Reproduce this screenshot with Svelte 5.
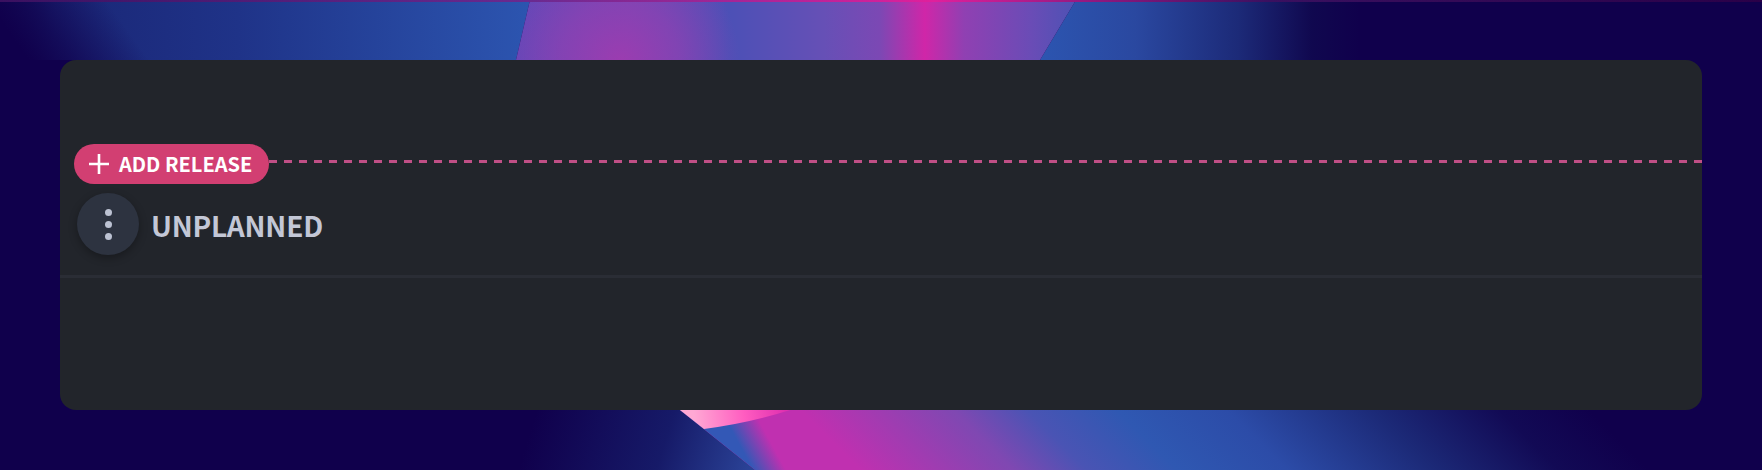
<script lang="ts">
	const releaseLabel = 'ADD RELEASE';
	const groupName = 'UNPLANNED';
</script>

<div class="page">
	<svg class="backdrop" viewBox="0 0 1762 470" preserveAspectRatio="none" aria-hidden="true">
		<defs>
			<linearGradient id="topBlue" gradientUnits="userSpaceOnUse" x1="0" y1="0" x2="530" y2="0">
				<stop offset="0" stop-color="#16165f" />
				<stop offset="0.1" stop-color="#1a2676" />
				<stop offset="0.45" stop-color="#1f3388" />
				<stop offset="1" stop-color="#2c55b0" />
			</linearGradient>
			<linearGradient id="topCorner" gradientUnits="userSpaceOnUse" x1="30" y1="62" x2="110" y2="5">
				<stop offset="0" stop-color="#10004c" />
				<stop offset="0.35" stop-color="#10004c" stop-opacity="0.7" />
				<stop offset="1" stop-color="#10004c" stop-opacity="0" />
			</linearGradient>
			<linearGradient id="topPink" gradientUnits="userSpaceOnUse" x1="516" y1="0" x2="1076" y2="0">
				<stop offset="0" stop-color="#6048b8" />
				<stop offset="0.2" stop-color="#6a4ab6" />
				<stop offset="0.38" stop-color="#4c50b6" />
				<stop offset="0.55" stop-color="#6650b6" />
				<stop offset="0.65" stop-color="#7c48b4" />
				<stop offset="0.73" stop-color="#d026a8" />
				<stop offset="0.8" stop-color="#9040b2" />
				<stop offset="0.92" stop-color="#6a4cb6" />
				<stop offset="1" stop-color="#4d52b4" />
			</linearGradient>
			<radialGradient id="topGlow" gradientUnits="userSpaceOnUse" cx="620" cy="62" r="120">
				<stop offset="0" stop-color="#9c3cb0" />
				<stop offset="0.5" stop-color="#9040b2" stop-opacity="0.7" />
				<stop offset="1" stop-color="#9040b2" stop-opacity="0" />
			</radialGradient>
			<linearGradient id="topRight" gradientUnits="userSpaceOnUse" x1="1040" y1="0" x2="1360" y2="0">
				<stop offset="0" stop-color="#2c55b0" />
				<stop offset="0.3" stop-color="#2a48a0" />
				<stop offset="0.62" stop-color="#1c2a78" />
				<stop offset="0.85" stop-color="#10084f" />
				<stop offset="1" stop-color="#10004c" />
			</linearGradient>
			<linearGradient id="bottomLeft" gradientUnits="userSpaceOnUse" x1="540" y1="400" x2="750" y2="465">
				<stop offset="0" stop-color="#10004c" />
				<stop offset="0.6" stop-color="#161a68" />
				<stop offset="1" stop-color="#2a4296" />
			</linearGradient>
			<linearGradient id="bottomMain" gradientUnits="userSpaceOnUse" x1="712" y1="440" x2="1166" y2="-14">
				<stop offset="0" stop-color="#c030b0" />
				<stop offset="0.13" stop-color="#c030b0" />
				<stop offset="0.3" stop-color="#7f48b2" />
				<stop offset="0.38" stop-color="#4a54b4" />
				<stop offset="0.48" stop-color="#2f58b2" />
				<stop offset="0.6" stop-color="#2c4ca8" />
				<stop offset="0.76" stop-color="#1c2a78" />
				<stop offset="0.9" stop-color="#120a55" />
				<stop offset="1" stop-color="#10004c" />
			</linearGradient>
			<linearGradient id="bottomWedge" gradientUnits="userSpaceOnUse" x1="722" y1="462" x2="768" y2="437">
				<stop offset="0" stop-color="#3358b6" />
				<stop offset="0.45" stop-color="#3358b6" />
				<stop offset="1" stop-color="#3358b6" stop-opacity="0" />
			</linearGradient>
			<linearGradient id="flare" gradientUnits="userSpaceOnUse" x1="695" y1="422" x2="785" y2="410">
				<stop offset="0" stop-color="#ffa8d4" />
				<stop offset="0.55" stop-color="#ff5cc0" />
				<stop offset="1" stop-color="#e030b0" />
			</linearGradient>
			<linearGradient id="topEdge" gradientUnits="userSpaceOnUse" x1="0" y1="0" x2="1762" y2="0">
				<stop offset="0" stop-color="#3a1060" />
				<stop offset="0.3" stop-color="#6a2a90" />
				<stop offset="0.53" stop-color="#e0209c" />
				<stop offset="0.72" stop-color="#3a1060" />
				<stop offset="1" stop-color="#2a0048" />
			</linearGradient>
		</defs>
		<rect width="1762" height="470" fill="#10004c" />
		<polygon points="0,0 530,0 516,60 0,60" fill="url(#topBlue)" />
		<rect width="200" height="60" fill="url(#topCorner)" />
		<polygon points="1076,0 1360,0 1360,60 1040,60" fill="url(#topRight)" />
		<polygon points="530,0 1076,0 1040,60 516,60" fill="url(#topPink)" />
		<polygon points="530,0 800,0 800,60 516,60" fill="url(#topGlow)" />
		<rect width="1762" height="2" fill="url(#topEdge)" />
		<polygon points="520,410 680,410 755,470 520,470" fill="url(#bottomLeft)" />
		<polygon points="680,410 1720,410 1720,470 755,470" fill="url(#bottomMain)" />
		<polygon points="680,410 860,410 860,470 755,470" fill="url(#bottomWedge)" />
		<path d="M680 410 L704 429 Q750 423 790 410 Z" fill="url(#flare)" />
	</svg>

	<section class="card">
		<div class="release-row">
			<button class="add-release">
				<svg viewBox="0 0 20 20" width="20" height="20" aria-hidden="true">
					<path d="M10 0V20M0 10H20" fill="none" stroke="currentColor" stroke-width="2.6" />
				</svg>
				{releaseLabel}
			</button>
			<span class="dashes"></span>
		</div>
		<div class="group">
			<button class="menu" aria-label="Menu">
				<span></span><span></span><span></span>
			</button>
			<h2>{groupName}</h2>
		</div>
	</section>
</div>

<style>
	:global(body) {
		margin: 0;
		background: #10004c;
	}

	.page {
		position: relative;
		width: 1762px;
		height: 470px;
		padding: 60px;
		box-sizing: border-box;
		overflow: hidden;
		font-family: "Noto Sans CJK JP", "Noto Sans", sans-serif;
	}

	.backdrop {
		position: absolute;
		inset: 0;
		width: 100%;
		height: 100%;
	}

	.card {
		position: relative;
		height: 350px;
		padding-top: 84px;
		box-sizing: border-box;
		background: #22252b;
		border-radius: 16px;
	}

	.release-row {
		display: flex;
		align-items: center;
		height: 40px;
		padding-left: 14px;
	}

	.add-release {
		display: flex;
		align-items: center;
		gap: 10px;
		width: 195px;
		height: 40px;
		flex: none;
		padding: 0 0 0 15px;
		border: 0;
		border-radius: 20px;
		background: #d23f72;
		color: #fff;
		font: 700 20px/1 "Noto Sans CJK JP", "Noto Sans", sans-serif;
		white-space: nowrap;
	}

	.dashes {
		flex: 1;
		height: 3px;
		margin-top: -5px;
		background: repeating-linear-gradient(90deg, #c04f86 0 8px, transparent 8px 15px);
	}

	.group {
		display: flex;
		align-items: flex-start;
		gap: 12px;
		height: 82px;
		padding: 9px 0 0 17px;
		border-bottom: 3px solid #2a2d35;
	}

	.menu {
		display: flex;
		flex-direction: column;
		align-items: center;
		justify-content: center;
		gap: 5px;
		width: 62px;
		height: 62px;
		flex: none;
		padding: 0;
		border: 0;
		border-radius: 50%;
		background: #2d3340;
		box-shadow: 0 3px 8px rgba(0, 0, 0, 0.3);
	}

	.menu span {
		width: 7px;
		height: 7px;
		border-radius: 50%;
		background: #bcc2d2;
	}

	h2 {
		margin: 18px 0 0;
		color: #c3c7d6;
		font-size: 28px;
		font-weight: 700;
		line-height: 1;
		letter-spacing: -0.2px;
	}
</style>
